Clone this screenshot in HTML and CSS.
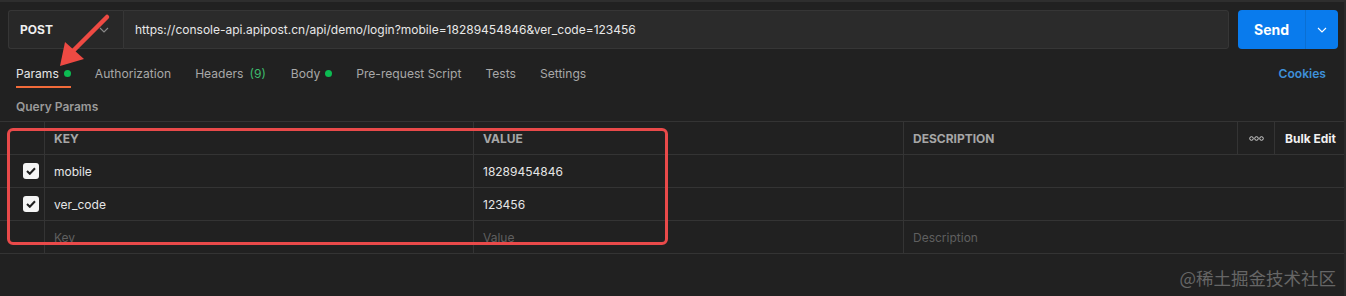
FILE: index.html
```html
<!DOCTYPE html>
<html lang="en">
<head>
  <meta charset="UTF-8" />
  <title>Request</title>
  <link rel="stylesheet" href="styles.css">
</head>
<body>
  <div class="page">

    <!-- Request bar -->
    <div class="request-bar">
      <div class="method">
        <span>POST</span>
        <svg class="chev" width="10" height="6" viewBox="0 0 10 6"><path d="M1 1l4 4 4-4" fill="none" stroke="#8a8a8a" stroke-width="1.1"/></svg>
      </div>
      <div class="url">https://console-api.apipost.cn/api/demo/login?mobile=18289454846&amp;ver_code=123456</div>
      <div class="send">
        <span class="send-label">Send</span>
        <span class="send-more">
          <svg width="10" height="6" viewBox="0 0 10 6"><path d="M1 1l4 4 4-4" fill="none" stroke="#fff" stroke-width="1.1"/></svg>
        </span>
      </div>
    </div>

    <!-- Tabs -->
    <div class="tabs">
      <div class="tab active">Params <i class="dot"></i></div>
      <div class="tab">Authorization</div>
      <div class="tab">Headers <span class="count">(9)</span></div>
      <div class="tab">Body <i class="dot"></i></div>
      <div class="tab">Pre-request Script</div>
      <div class="tab">Tests</div>
      <div class="tab">Settings</div>
      <div class="cookies">Cookies</div>
    </div>

    <div class="section-title">Query Params</div>

    <!-- Params table -->
    <div class="table">
      <div class="cell head"></div>
      <div class="cell head">KEY</div>
      <div class="cell head">VALUE</div>
      <div class="cell head">DESCRIPTION</div>
      <div class="cell head more">
        <svg width="15" height="5" viewBox="0 0 15 5"><g fill="none" stroke="#d0d0d0" stroke-width="1"><circle cx="2.5" cy="2.5" r="1.8"/><circle cx="7.5" cy="2.5" r="1.8"/><circle cx="12.5" cy="2.5" r="1.8"/></g></svg>
      </div>
      <div class="cell head bulk">Bulk Edit</div>

      <div class="cell check"><span class="box"><svg width="10" height="8" viewBox="0 0 10 8"><path d="M1 4l2.8 2.8L9 1.2" fill="none" stroke="#1e1e1e" stroke-width="2"/></svg></span></div>
      <div class="cell">mobile</div>
      <div class="cell">18289454846</div>
      <div class="cell desc"></div>

      <div class="cell check"><span class="box"><svg width="10" height="8" viewBox="0 0 10 8"><path d="M1 4l2.8 2.8L9 1.2" fill="none" stroke="#1e1e1e" stroke-width="2"/></svg></span></div>
      <div class="cell">ver_code</div>
      <div class="cell">123456</div>
      <div class="cell desc"></div>

      <div class="cell check"></div>
      <div class="cell placeholder">Key</div>
      <div class="cell placeholder">Value</div>
      <div class="cell desc placeholder">Description</div>
    </div>

    <!-- annotations -->
    <div class="mark-box"></div>
    <svg class="mark-arrow" width="120" height="80" viewBox="0 0 120 80">
      <path d="M107 17L73 51" stroke="#ee4a43" stroke-width="4.5" stroke-linecap="round"/>
      <polygon points="60,66 65,42 84,59" fill="#ee4a43"/>
    </svg>
    <div class="watermark">@稀土掘金技术社区</div>
  </div>
</body>
</html>
```

FILE: styles.css
```css
body {
  margin: 0;
  background: #212121;
  font-family: Inter, 'Noto Sans', sans-serif;
  color: #e6e6e6;
}

.page {
  position: relative;
  height: 296px;
  border-top: 2px solid #2e2e2e;
  border-right: 2px solid #2a2a2a;
  box-sizing: border-box;
  overflow: hidden;
}

.request-bar {
  display: flex;
  gap: 9px;
  padding: 8px 6px 0 8px;
  height: 39px;
}

.method {
  width: 115px;
  display: flex;
  align-items: center;
  justify-content: space-between;
  padding: 0 14px 0 11px;
  box-sizing: border-box;
  background: #282828;
  border: 1px solid #363636;
  border-right: none;
  border-radius: 3px 0 0 3px;
  font-size: 12px;
  font-weight: 700;
  color: #efefef;
  margin-right: -9px;
}

.url {
  flex: 1;
  display: flex;
  align-items: center;
  padding-left: 11px;
  background: #2b2b2b;
  border: 1px solid #363636;
  border-radius: 0 3px 3px 0;
  font-size: 12px;
  color: #e8e8e8;
}

.send {
  width: 100px;
  display: flex;
  background: #097bed;
  border-radius: 4px;
  color: #fff;
}

.send-label {
  flex: 1;
  display: flex;
  align-items: center;
  justify-content: center;
  font-size: 14px;
  font-weight: 700;
}

.send-more {
  width: 32px;
  display: flex;
  align-items: center;
  justify-content: center;
  border-left: 1px solid #0a6fd3;
}

.tabs {
  display: flex;
  align-items: center;
  height: 30px;
  margin-top: 9px;
  padding: 0 18px 0 16px;
  font-size: 12.1px;
  color: #a8a8a8;
}

.tab {
  position: relative;
  display: flex;
  align-items: center;
  gap: 5px;
  height: 30px;
  margin-right: 24px;
}

.tab.active {
  color: #e6e6e6;
}

.tab.active::after {
  content: '';
  position: absolute;
  left: 0;
  right: 0;
  bottom: 0;
  height: 2px;
  background: #f26b3a;
}

.dot {
  width: 7px;
  height: 7px;
  border-radius: 50%;
  background: #0cbb52;
}

.count {
  margin-left: 1px;
  margin-right: 1px;
  color: #3dbb6c;
}

.cookies {
  margin-left: auto;
  color: #3e8fd8;
  font-weight: 600;
}

.section-title {
  padding: 11px 16px 0;
  height: 22px;
  font-size: 12px;
  font-weight: 600;
  color: #9a9a9a;
}

.table {
  display: grid;
  grid-template-columns: 44px 429px 430px 334px 37px 1fr;
  grid-auto-rows: 33px;
  border-top: 1px solid #343434;
  font-size: 12px;
}

.cell {
  display: flex;
  align-items: center;
  padding-left: 9px;
  border-bottom: 1px solid #343434;
  border-left: 1px solid #343434;
  color: #e6e6e6;
}

.cell:nth-child(1) {
  border-left: none;
}

.head {
  font-weight: 700;
  color: #a6a6a6;
}

.head.more {
  justify-content: center;
  padding: 0;
}

.head.bulk {
  color: #f0f0f0;
  padding-left: 10px;
}

.check {
  border-left: none;
  padding-left: 23px;
}

.box {
  width: 16px;
  height: 16px;
  border-radius: 3px;
  background: #f5f5f5;
  display: flex;
  align-items: center;
  justify-content: center;
}

.desc {
  grid-column: span 3;
}

.placeholder {
  color: #5f5f5f;
}

.mark-box {
  position: absolute;
  left: 7px;
  top: 126px;
  width: 661px;
  height: 117px;
  box-sizing: border-box;
  border: 3px solid #e94a4a;
  border-radius: 6px;
}

.mark-arrow {
  position: absolute;
  left: 0;
  top: -2px;
}

.watermark {
  position: absolute;
  right: 8px;
  bottom: 6px;
  font-size: 17.5px;
  color: #666666;
  font-family: 'Noto Sans CJK SC', sans-serif;
}
```
